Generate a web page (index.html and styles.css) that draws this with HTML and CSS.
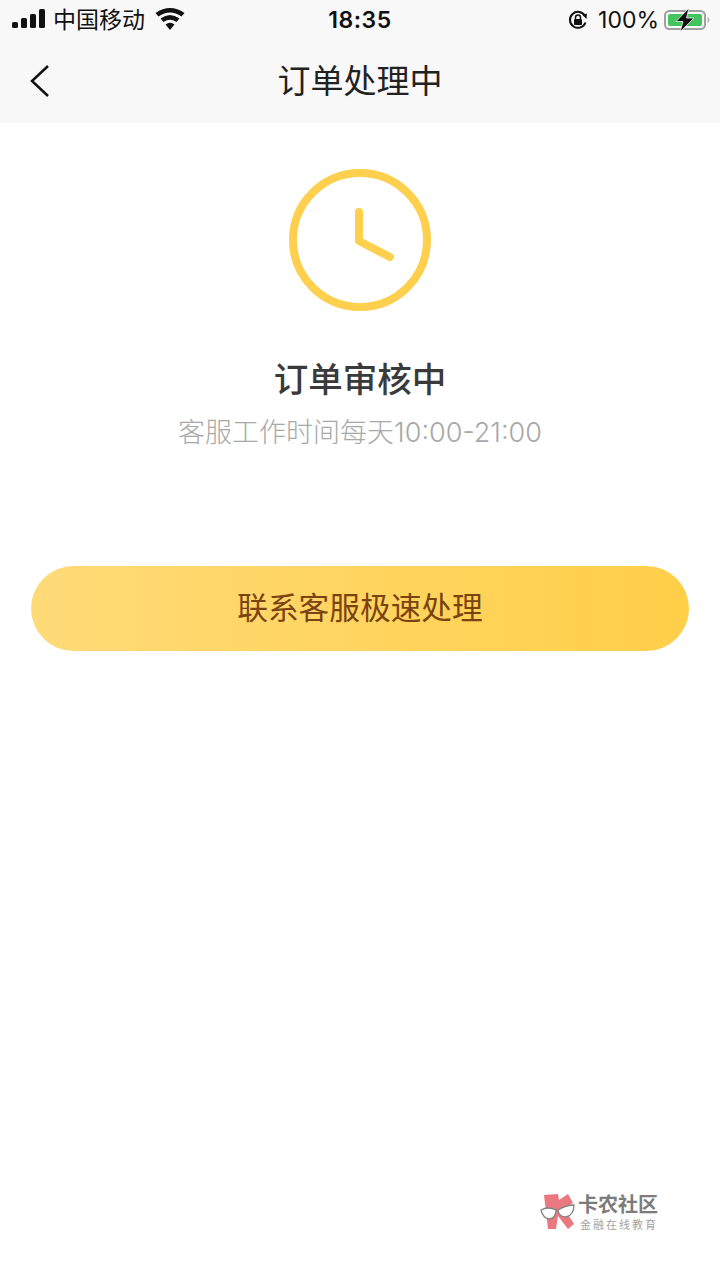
FILE: index.html
```html
<!DOCTYPE html>
<html>
<head lang="zh">
    <meta charset="UTF-8">
    <title>订单处理中</title>
    <link rel="stylesheet" href="styles.css">
</head>
<body>

<div class="top">
    <div class="status-bar">
        <div class="status-left">
            <svg class="signal" width="33" height="20" viewBox="0 0 33 20">
                <rect x="0" y="13" width="6" height="6" rx="1.5"/>
                <rect x="9" y="9" width="6" height="10" rx="1.5"/>
                <rect x="18" y="5" width="6" height="14" rx="1.5"/>
                <rect x="27" y="0" width="6" height="19" rx="1.5"/>
            </svg>
            <span class="carrier">中国移动</span>
            <svg class="wifi" width="30" height="22" viewBox="0 0 30 22">
                <path d="M15 22 L10.5 16.5 Q15 13 19.500 16.500 Z"/>
                <path d="M8.500 14 L5.500 10.500 Q15 3.500 24.500 10.500 L21.500 14 Q15 9.500 8.500 14 Z"/>
                <path d="M3.500 8.500 L0.500 5 Q15 -5 29.500 5 L26.500 8.500 Q15 0.500 3.500 8.500 Z"/>
            </svg>
        </div>
        <div class="clock-time">18:35</div>
        <div class="status-right">
            <svg class="lock" width="20" height="20" viewBox="0 0 20 20">
                <path d="M17.500 12.500 A8 8 0 1 1 17 6" fill="none" stroke="#111" stroke-width="2"/>
                <path d="M14.500 5 L19 3.500 L18.500 9 Z" fill="#111"/>
                <rect x="6" y="9" width="8" height="6" rx="1" fill="#111"/>
                <path d="M7.500 9 V7.500 A2.500 2.500 0 0 1 12.500 7.500 V9" fill="none" stroke="#111" stroke-width="1.500"/>
            </svg>
            <span class="percent">100%</span>
            <svg class="battery" width="46" height="24" viewBox="0 0 46 24">
                <rect x="1" y="3" width="40" height="18" rx="4.500" fill="none" stroke="#a0a0a0" stroke-width="2"/>
                <rect x="4" y="6" width="34" height="12" rx="2" fill="#41c55c"/>
                <path d="M43.500 9 Q45.500 10 45.500 12 Q45.500 14 43.500 15 Z" fill="#b5b5b5"/>
                <path d="M25 0 L12 13.500 H19 L16 24 L30 10 H22.500 Z" fill="#111" stroke="#f4f4f4" stroke-width="0.800"/>
            </svg>
        </div>
    </div>
    <div class="nav-bar">
        <svg class="back" width="22" height="36" viewBox="0 0 22 36">
            <path d="M19 3 L3 18 L19 33" fill="none" stroke="#111" stroke-width="2.500"/>
        </svg>
        <div class="nav-title">订单处理中</div>
    </div>
</div>

<div class="content">
    <svg class="clock-icon" width="142" height="142" viewBox="0 0 142 142">
        <circle cx="71" cy="71" r="67" fill="none" stroke="#ffd04d" stroke-width="8"/>
        <path d="M70 43 V72 L101 88" fill="none" stroke="#ffd04d" stroke-width="8" stroke-linecap="round" stroke-linejoin="round"/>
    </svg>
    <h1 class="result-title">订单审核中</h1>
    <p class="result-desc">客服工作时间每天10:00-21:00</p>
    <a class="contact-btn" href="javascript:void(0);">联系客服极速处理</a>
</div>

<div class="watermark">
    <svg class="wm-logo" width="36" height="38" viewBox="0 0 36 38">
        <path d="M4 3 L18 2 L19 8 L28 2 L33 11 L24 16 L34 32 L28 37 L18 24 L16 37 L8 37 Z" fill="#ea6a72"/>
        <path d="M1 18 Q8 14 16 18 Q16 26 9 27 Q3 26 1 18 Z" fill="#fff" stroke="#777" stroke-width="1.300"/>
        <path d="M18 18 Q26 13 34 13 Q34 23 26 25 Q19 25 18 18 Z" fill="#fff" stroke="#777" stroke-width="1.300"/>
    </svg>
    <div class="wm-text">
        <div class="wm-name">卡农社区</div>
        <div class="wm-sub">金融在线教育</div>
    </div>
</div>

</body>
</html>
```

FILE: styles.css
```css
html, body, div, p, h1, a, span {
    margin: 0;
    padding: 0;
}

body {
    width: 720px;
    height: 1280px;
    position: relative;
    overflow: hidden;
    background: #ffffff;
    font-family: "Noto Sans CJK SC", "Inter", sans-serif;
}

a {
    text-decoration: none;
}

.top {
    height: 123px;
    background: #f8f8f8;
}

.status-bar {
    height: 40px;
    padding: 0 10px 0 12px;
    display: flex;
    align-items: center;
    justify-content: space-between;
    position: relative;
    color: #111111;
}

.status-left, .status-right {
    display: flex;
    align-items: center;
}

.signal {
    fill: #111111;
    margin-top: -2px;
}

.carrier {
    font-size: 23px;
    margin-left: 8px;
    line-height: 40px;
    margin-top: -5px;
}

.wifi {
    fill: #111111;
    margin-left: 10px;
    margin-top: -2px;
}

.clock-time {
    position: absolute;
    left: 0;
    right: 0;
    text-align: center;
    font-family: "Inter", sans-serif;
    font-size: 23px;
    font-weight: 600;
    letter-spacing: 0.5px;
}

.percent {
    font-family: "Inter", sans-serif;
    font-size: 23px;
    margin-left: 10px;
    margin-right: 5px;
}

.battery {
    margin-top: -1px;
}

.nav-bar {
    height: 83px;
    display: flex;
    align-items: center;
    justify-content: center;
    position: relative;
}

.back {
    position: absolute;
    left: 29px;
    top: 23px;
}

.nav-title {
    font-size: 33px;
    color: #222222;
    margin-top: -6px;
}

.content {
    display: flex;
    flex-direction: column;
    align-items: center;
    padding: 46px 31px 0;
}

.result-title {
    font-size: 34.500px;
    font-weight: 500;
    color: #3a3a3a;
    line-height: 50px;
    margin-top: 41px;
}

.result-desc {
    font-family: "Inter", "Noto Sans CJK SC", sans-serif;
    font-size: 27px;
    font-weight: 300;
    color: #a8a8a8;
    line-height: 40px;
    margin-top: 11px;
}

.contact-btn {
    width: 100%;
    height: 85px;
    line-height: 80px;
    margin-top: 113px;
    border-radius: 43px;
    text-align: center;
    font-size: 30.700px;
    color: #7a4312;
    background: linear-gradient(90deg, #ffdb78, #ffcf48);
}

.watermark {
    position: absolute;
    left: 540px;
    top: 1192px;
    display: flex;
    opacity: 0.9;
}

.wm-text {
    margin-left: 2px;
}

.wm-name {
    font-size: 20px;
    font-weight: 700;
    line-height: 24px;
    color: #6e6e6e;
}

.wm-sub {
    font-size: 11px;
    line-height: 14px;
    letter-spacing: 2px;
    color: #999999;
    margin-left: 2px;
    margin-top: 1px;
}
```
